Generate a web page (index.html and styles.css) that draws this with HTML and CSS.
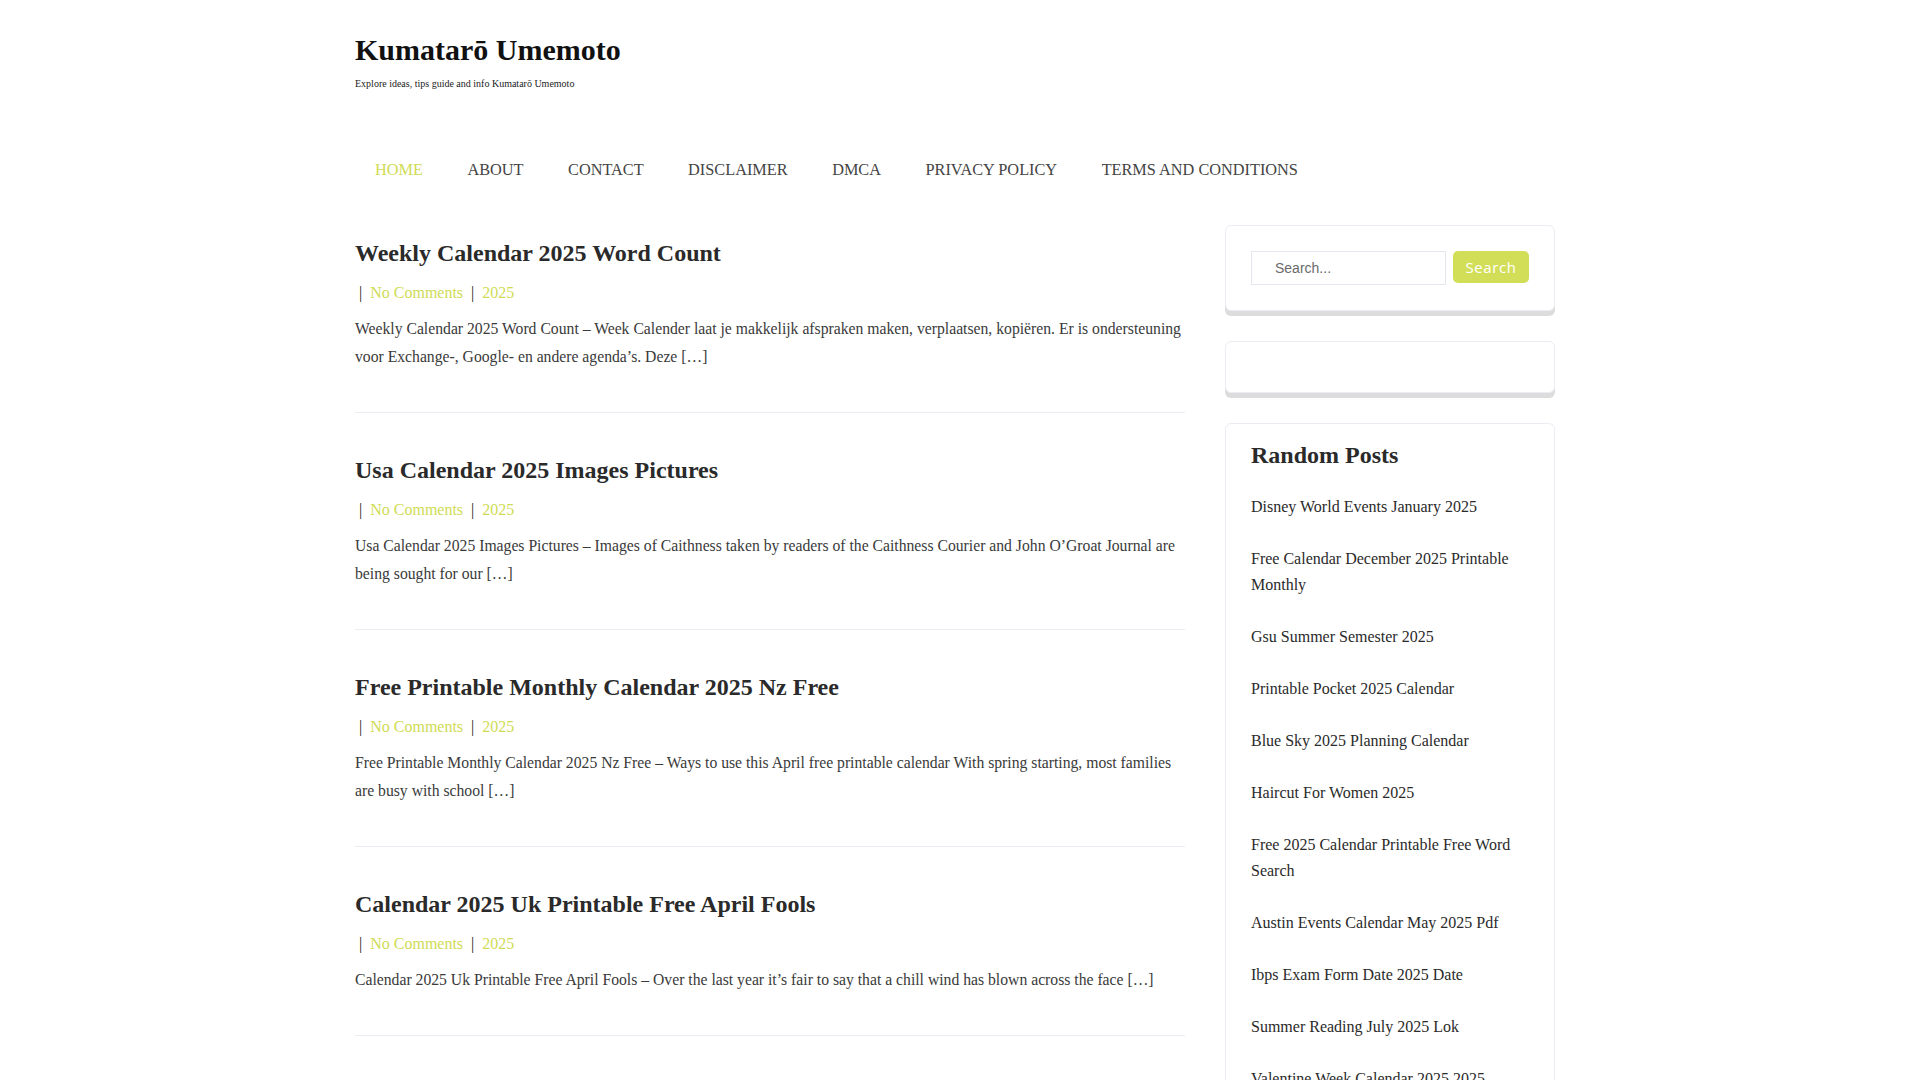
FILE: index.html
```html
<!DOCTYPE html>
<html lang="en">
<head>
<meta charset="utf-8">
<title>Kumatarō Umemoto</title>
<link rel="stylesheet" href="styles.css">
</head>
<body>
<div class="wrap">
  <header class="site-header">
    <h1 class="site-title">Kumatarō Umemoto</h1>
    <p class="site-desc">Explore ideas, tips guide and info Kumatarō Umemoto</p>
  </header>
  <nav class="menu">
    <a class="menu-item active" href="#">HOME</a>
    <a class="menu-item" href="#">ABOUT</a>
    <a class="menu-item" href="#">CONTACT</a>
    <a class="menu-item" href="#">DISCLAIMER</a>
    <a class="menu-item" href="#">DMCA</a>
    <a class="menu-item" href="#">PRIVACY POLICY</a>
    <a class="menu-item" href="#">TERMS AND CONDITIONS</a>
  </nav>
  <div class="layout">
    <main class="posts">
      <article class="post">
        <h2 class="post-title">Weekly Calendar 2025 Word Count</h2>
        <div class="meta"><span class="sep">|</span><a href="#">No Comments</a><span class="sep">|</span><a href="#">2025</a></div>
        <p class="excerpt">Weekly Calendar 2025 Word Count – Week Calender laat je makkelijk afspraken maken, verplaatsen, kopiëren. Er is ondersteuning voor Exchange-, Google- en andere agenda’s. Deze […]</p>
      </article>
      <article class="post">
        <h2 class="post-title">Usa Calendar 2025 Images Pictures</h2>
        <div class="meta"><span class="sep">|</span><a href="#">No Comments</a><span class="sep">|</span><a href="#">2025</a></div>
        <p class="excerpt">Usa Calendar 2025 Images Pictures – Images of Caithness taken by readers of the Caithness Courier and John O’Groat Journal are being sought for our […]</p>
      </article>
      <article class="post">
        <h2 class="post-title">Free Printable Monthly Calendar 2025 Nz Free</h2>
        <div class="meta"><span class="sep">|</span><a href="#">No Comments</a><span class="sep">|</span><a href="#">2025</a></div>
        <p class="excerpt">Free Printable Monthly Calendar 2025 Nz Free – Ways to use this April free printable calendar With spring starting, most families are busy with school […]</p>
      </article>
      <article class="post">
        <h2 class="post-title">Calendar 2025 Uk Printable Free April Fools</h2>
        <div class="meta"><span class="sep">|</span><a href="#">No Comments</a><span class="sep">|</span><a href="#">2025</a></div>
        <p class="excerpt">Calendar 2025 Uk Printable Free April Fools – Over the last year it’s fair to say that a chill wind has blown across the face […]</p>
      </article>
      <article class="post">
        <h2 class="post-title">Printable Pocket 2025 Calendar</h2>
        <div class="meta"><span class="sep">|</span><a href="#">No Comments</a><span class="sep">|</span><a href="#">2025</a></div>
        <p class="excerpt">Printable Pocket 2025 Calendar – A pocket calendar is a handy way to keep track of appointments, birthdays and holidays wherever you go during the year […]</p>
      </article>
      <article class="post">
        <h2 class="post-title">Blue Sky 2025 Planning Calendar</h2>
        <div class="meta"><span class="sep">|</span><a href="#">No Comments</a><span class="sep">|</span><a href="#">2025</a></div>
        <p class="excerpt">Blue Sky 2025 Planning Calendar – Planning ahead makes the whole year easier, from monthly goals to weekly schedules and daily reminders for the family […]</p>
      </article>
      <article class="post">
        <h2 class="post-title">Haircut For Women 2025</h2>
        <div class="meta"><span class="sep">|</span><a href="#">No Comments</a><span class="sep">|</span><a href="#">2025</a></div>
        <p class="excerpt">Haircut For Women 2025 – The newest styles of the season bring fresh cuts, soft layers and bold colours that suit every face shape […]</p>
      </article>
    </main>
    <aside class="sidebar">
      <section class="widget">
        <form class="search-form">
          <input class="search-field" type="search" placeholder="Search...">
          <button class="search-btn" type="button">Search</button>
        </form>
      </section>
      <section class="widget"></section>
      <section class="widget widget-list">
        <h3 class="widget-title">Random Posts</h3>
        <ul class="rp-list">
          <li><a href="#">Disney World Events January 2025</a></li>
          <li><a href="#">Free Calendar December 2025 Printable Monthly</a></li>
          <li><a href="#">Gsu Summer Semester 2025</a></li>
          <li><a href="#">Printable Pocket 2025 Calendar</a></li>
          <li><a href="#">Blue Sky 2025 Planning Calendar</a></li>
          <li><a href="#">Haircut For Women 2025</a></li>
          <li><a href="#">Free 2025 Calendar Printable Free Word Search</a></li>
          <li><a href="#">Austin Events Calendar May 2025 Pdf</a></li>
          <li><a href="#">Ibps Exam Form Date 2025 Date</a></li>
          <li><a href="#">Summer Reading July 2025 Lok</a></li>
          <li><a href="#">Valentine Week Calendar 2025 2025</a></li>
          <li><a href="#">Weekly Calendar 2025 Word Count</a></li>
        </ul>
      </section>
    </aside>
  </div>
</div>
</body>
</html>
```

FILE: styles.css
```css
* { box-sizing: border-box; }

html, body {
  margin: 0;
  padding: 0;
  background: #ffffff;
}

body {
  font-family: "Liberation Serif", "Times New Roman", serif;
  color: #333333;
  font-size: 16px;
  padding-right: 10px;
}

a { text-decoration: none; }

.wrap {
  width: 1200px;
  margin: 0 auto;
  padding-bottom: 60px;
}

.site-header {
  padding-top: 31.5px;
}

.site-title {
  margin: 0;
  font-size: 30px;
  line-height: 36px;
  font-weight: bold;
  color: #111111;
}

.site-desc {
  margin: 9.5px 0 0;
  font-size: 10px;
  line-height: 14px;
  color: #222222;
}

.menu {
  display: flex;
  gap: 4.5px;
  margin-top: 54px;
  height: 50px;
  align-items: center;
}

.menu-item {
  padding: 0 20px;
  font-size: 16.3px;
  line-height: 50px;
  color: #444444;
}

.menu-item.active {
  color: #cfdb55;
}

.layout {
  display: flex;
  gap: 40px;
  align-items: flex-start;
  margin-top: 30px;
}

.posts {
  width: 830px;
  padding-top: 13px;
}

.post {
  padding-bottom: 41px;
  border-bottom: 1px solid #ececf3;
  margin-bottom: 42px;
}

.post-title {
  margin: 0 0 10px;
  font-size: 24px;
  line-height: 31px;
  font-weight: bold;
  color: #2a2a2a;
}

.meta {
  display: flex;
  align-items: center;
  font-size: 16px;
  line-height: 28px;
  margin-bottom: 8px;
  padding-left: 4px;
}

.meta .sep {
  color: #222222;
  margin-right: 8px;
}

.meta a {
  color: #cfdb55;
  margin-right: 8px;
}

.excerpt {
  margin: 0;
  font-size: 15.7px;
  line-height: 28px;
  color: #3a3a3a;
}

.sidebar {
  width: 330px;
  display: flex;
  flex-direction: column;
  gap: 30px;
}

.widget {
  border: 1px solid #ececf3;
  border-radius: 6px;
  box-shadow: 0 5px 0 #dcdcdc;
  padding: 25px;
  min-height: 50px;
  background: #ffffff;
}

.search-form {
  display: flex;
  align-items: flex-start;
  gap: 7px;
  margin: 0;
}

.search-field {
  flex: 1;
  min-width: 0;
  height: 34px;
  border: 1px solid #e6e6ee;
  padding: 0 0 0 23px;
  font-family: "Liberation Sans", Arial, sans-serif;
  font-size: 14px;
  color: #666666;
  outline: none;
  background: #ffffff;
}

.search-field::placeholder {
  color: #6a6a6a;
}

.search-btn {
  width: 76px;
  height: 32px;
  border: none;
  border-radius: 5px;
  background: #d3de58;
  color: #ffffff;
  font-family: "Open Sans", "Liberation Sans", sans-serif;
  font-size: 15px;
  letter-spacing: 0.6px;
  padding: 0;
}

.widget-list {
  padding-top: 16px;
}

.widget-title {
  margin: 0 0 10px;
  font-size: 24px;
  line-height: 31px;
  font-weight: bold;
  color: #2a2a2a;
}

.rp-list {
  list-style: none;
  margin: 0;
  padding: 0;
}

.rp-list li {
  padding: 13px 0;
  font-size: 16px;
  line-height: 26px;
}

.rp-list a {
  color: #2a2a2a;
}
```
